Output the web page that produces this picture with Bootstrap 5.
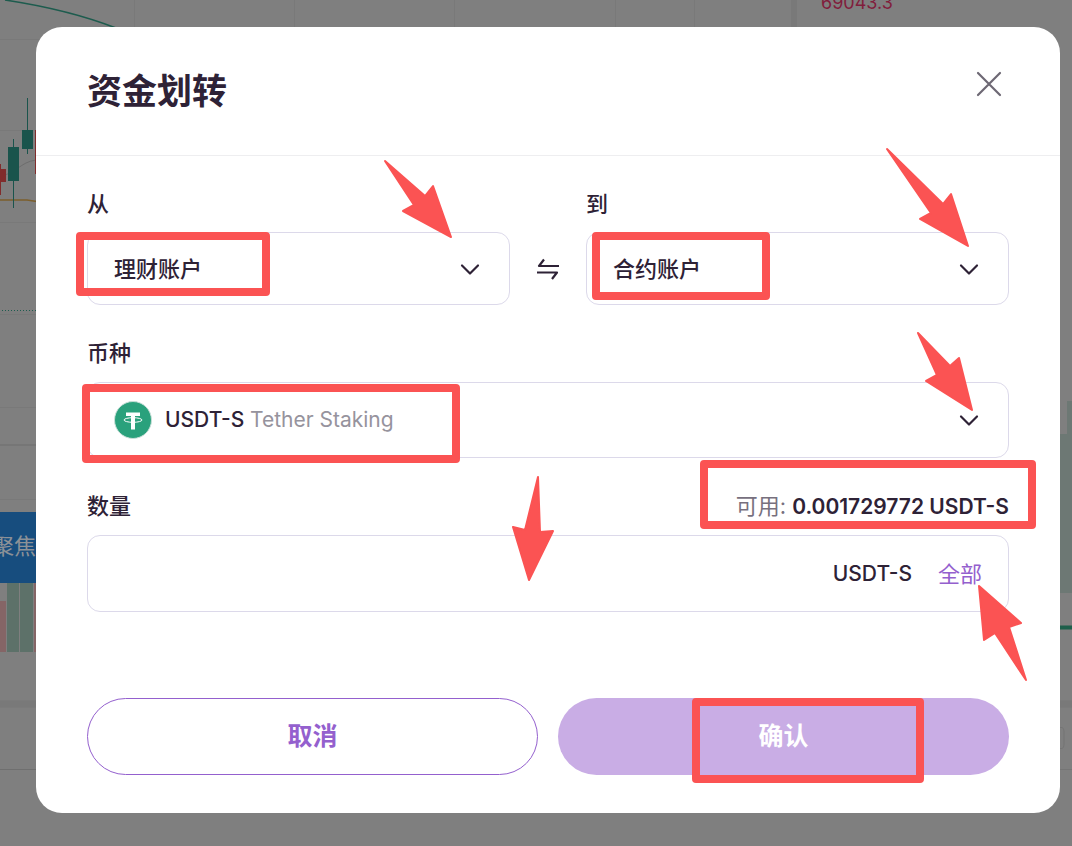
<!DOCTYPE html>
<html lang="zh-CN">
<head>
<meta charset="utf-8">
<meta name="viewport" content="width=device-width, initial-scale=1">
<title>资金划转</title>
<link href="https://cdn.jsdelivr.net/npm/bootstrap@5.3.0/dist/css/bootstrap.min.css" rel="stylesheet">
<style>
  :root {
    --ink: #2e2236;
    --line: #dcd9ea;
    --violet: #9460ce;
    --mark-red: #fb5353;
  }
  body {
    font-family: Inter, "Noto Sans CJK SC", sans-serif;
    font-size: 22px;
    line-height: 32px;
    color: var(--ink);
    background: #7f7f7f;
  }
  /* dimmed trading page behind the dialog */
  .market { z-index: 0; }
  .market-chart { flex: 1 1 0; min-width: 0; }
  .market-book { width: 281px; }
  .market-divider { width: 6px; height: 704px; background: #797979; }
  .market-price { font-size: 18px; line-height: 24px; color: #811d3c; margin-top: -9px; padding-left: 24px; }
  .market-right { width: 12px; }

  .transfer {
    z-index: 1;
    margin: 27px 12px 33px 36px;
    background: #fff;
    border-radius: 26px;
  }
  .transfer-head { padding: 32px 51px; border-bottom: 1px solid #eeeef0; }
  .transfer-title { font-size: 35px; line-height: 64px; font-weight: 700; }
  .transfer-body { padding: 32px 51px 38px; }
  .btn-x { width: 40px; height: 50px; }

  .field-label { font-weight: 500; line-height: 32px; margin-bottom: 12px; }
  .field-label-wide { margin-bottom: 13px; }
  .field {
    border: 1px solid var(--line);
    border-radius: 13px;
    height: 77px;
  }
  .field-account { height: 73px; }
  .field-coin { height: 76px; }
  .field select, .field input {
    appearance: none;
    border: 0;
    background: transparent;
    width: 100%;
    height: 100%;
    padding: 0 60px 0 26px;
    font-weight: 500;
    color: var(--ink);
    outline: 0;
    border-radius: 13px;
  }
  .field-coin select { padding-left: 77px; font-size: 21px; }
  .coin-face { left: 26px; top: 0; bottom: 0; pointer-events: none; }
  .coin-name { color: #96939d; padding-left: 98px; font-size: 21px; }
  .chev { right: 28px; top: 0; bottom: 0; pointer-events: none; }
  .swap { width: 76px; height: 73px; }
  .avail { color: #77707e; }
  .avail strong { font-weight: 600; color: var(--ink); font-size: 21px; }
  .unit { font-weight: 500; font-size: 21px; }
  .all { color: var(--violet); text-decoration: none; padding: 0 26px; }

  .actions { gap: 20px; margin-top: 86px; }
  .btn-pill { height: 77px; border-radius: 39px; font-size: 25px; font-weight: 700; }
  .btn-cancel, .btn-cancel:hover { border: 1px solid var(--violet); color: var(--violet); background: #fff; }
  .btn-ok, .btn-ok:hover { background: #c9ade5; color: #fff; border: 0; }

  /* red marker boxes and arrows lying over the form */
  .frame { position: absolute; border: 8px solid var(--mark-red); border-radius: 4px; pointer-events: none; z-index: 2; }
  .frame-from { left: -12px; top: -1px; width: 194px; height: 64px; }
  .frame-to { left: 5px; top: -1px; width: 178px; height: 68px; }
  .frame-coin { left: -6px; top: 1px; width: 378px; height: 79px; }
  .frame-avail { right: -27px; top: -30px; width: 336px; height: 69px; }
  .frame-ok { left: 134px; top: 0; width: 232px; height: 85px; }
  .arrow { position: absolute; pointer-events: none; z-index: 3; fill: var(--mark-red); stroke: var(--mark-red); stroke-width: 2; stroke-linejoin: round; overflow: visible; }
  .arrow-from { right: 57px; top: -73px; }
  .arrow-to { right: 39px; top: -85px; }
  .arrow-coin { right: 35px; top: -51px; }
  .arrow-amount { right: 454px; top: -60px; }
  .arrow-all { right: -20px; top: 49px; }
</style>
</head>
<body class="position-relative overflow-x-hidden">

<div class="market position-absolute top-0 start-0 w-100 h-100 d-flex overflow-hidden" aria-hidden="true">
  <svg class="market-chart" height="846">
    <g stroke="#797979">
      <path d="M134.500 0V40M294.500 0V40M454.500 0V40M615.500 0V40M694.500 0V40M0 39.500H40M0 130.500H40M0 222.500H40M0 314.500H40M0 407.500H40M0 499.500H40"/>
      <path d="M0 445H40M0 769.500H40" stroke="#6f6f6f"/>
      <path d="M0 704H40" stroke-width="7"/>
    </g>
    <path d="M5 0C45 6 85 16 116 28" fill="none" stroke="#1d5c4e" stroke-width="1.500"/>
    <path d="M0 176C16 174 20 162 36 160" fill="none" stroke="#6d6d6d"/>
    <path d="M0 200H27L40 202" fill="none" stroke="#7c5f2d" stroke-width="1.500"/>
    <path d="M2 310.500H40" stroke="#1d5c4e" stroke-dasharray="1 2"/>
    <path d="M13.500 139V208M27.500 98V154" stroke="#1a544c"/>
    <path d="M8 147H19V181H8ZM22 130H33V149H22Z" fill="#1a544c"/>
    <path d="M0 164H1V169H6V182H1V195H0ZM35 130H40V174H35Z" fill="#812c2c"/>
    <rect y="512" width="40" height="71" fill="#174d7e"/>
    <path d="M7 583H19V652H7ZM20 583H33V652H20Z" fill="#5d7169"/>
    <path d="M0 601H6V652H0ZM34 583H40V652H34Z" fill="#856566"/>
    <text x="-8" y="554" font-size="22" fill="#8c9197">聚焦</text>
  </svg>
  <div class="market-book flex-shrink-0 d-flex">
    <div class="market-divider"></div>
    <div class="market-price flex-grow-1">69043.3</div>
    <svg class="market-right" height="846" viewBox="0 0 12 846">
      <path d="M0 434H7V401H12V593H0Z" fill="#6d7874"/>
      <path d="M0 627.500H12" stroke="#1e5f4b" stroke-width="4"/>
      <path d="M0 704H12" stroke="#797979" stroke-width="7"/>
      <path d="M0 769.500H12M0 727.500H2Q4 728 4 731V745Q4 748 2 748.500H0" fill="none" stroke="#757575"/>
    </svg>
  </div>
</div>

<main class="transfer position-relative" role="dialog" aria-labelledby="ttl">
  <header class="transfer-head d-flex justify-content-between align-items-start">
    <h1 id="ttl" class="transfer-title m-0">资金划转</h1>
    <button type="button" class="btn-x btn p-0 border-0 d-flex align-items-center justify-content-center" aria-label="关闭">
      <svg width="26" height="26" viewBox="0 0 26 26" fill="none" stroke="#6d6874" stroke-width="2.200" stroke-linecap="round"><path d="M2 2 24 24M24 2 2 24"/></svg>
    </button>
  </header>

  <form class="transfer-body">
    <div class="d-flex align-items-end">
      <div class="flex-fill w-50">
        <label class="field-label d-block" for="from">从</label>
        <div class="field field-account position-relative">
          <select id="from"><option>理财账户</option><option>合约账户</option></select>
          <svg class="chev position-absolute my-auto" width="22" height="14" viewBox="0 0 22 14" fill="none" stroke="#2e2236" stroke-width="2.200" stroke-linecap="round" stroke-linejoin="round"><path d="M3 3.500 11 11.500 19 3.500"/></svg>
          <span class="frame frame-from"></span>
          <svg class="arrow arrow-from" width="68" height="78" viewBox="0 0 68 78"><path d="M1 1 41 36 49 26 67 77 19 51 30 45Z"/></svg>
        </div>
      </div>
      <button type="button" class="swap btn p-0 border-0 flex-shrink-0 d-flex align-items-center justify-content-center" aria-label="互换">
        <svg width="24" height="22" viewBox="0 0 24 22" fill="none" stroke="#2e2236" stroke-width="2.200" stroke-linejoin="round"><path d="M23 8H3L8 1.500M1 14.500H21L16 21"/></svg>
      </button>
      <div class="flex-fill w-50">
        <label class="field-label d-block" for="to">到</label>
        <div class="field field-account position-relative">
          <select id="to"><option>合约账户</option><option>理财账户</option></select>
          <svg class="chev position-absolute my-auto" width="22" height="14" viewBox="0 0 22 14" fill="none" stroke="#2e2236" stroke-width="2.200" stroke-linecap="round" stroke-linejoin="round"><path d="M3 3.500 11 11.500 19 3.500"/></svg>
          <span class="frame frame-to"></span>
          <svg class="arrow arrow-to" width="83" height="99" viewBox="0 0 83 99"><path d="M1 1 57 56 65 46 82 98 34 71 45 65Z"/></svg>
        </div>
      </div>
    </div>

    <div class="pt-1 mt-4">
      <label class="field-label field-label-wide d-block mt-1" for="coin">币种</label>
      <div class="field field-coin position-relative">
        <select id="coin"><option>USDT-S</option></select>
        <div class="coin-face position-absolute d-flex align-items-center">
          <svg width="38" height="38" viewBox="0 0 38 38"><circle cx="19" cy="19" r="18.500" fill="#2aa17c" stroke="#c8dfd8"/><path d="M12 11.500H26V15H21V28.500H17V15H12Z" fill="#fff"/><ellipse cx="19" cy="19" rx="9" ry="2.300" fill="none" stroke="#fff"/></svg>
          <span class="coin-name">Tether Staking</span>
        </div>
        <svg class="chev position-absolute my-auto" width="22" height="14" viewBox="0 0 22 14" fill="none" stroke="#2e2236" stroke-width="2.200" stroke-linecap="round" stroke-linejoin="round"><path d="M3 3.500 11 11.500 19 3.500"/></svg>
        <span class="frame frame-coin"></span>
        <svg class="arrow arrow-coin" width="56" height="79" viewBox="0 0 56 79"><path d="M1 1 33 34 42 26 55 78 9 49 20 43Z"/></svg>
      </div>
    </div>

    <div class="pt-1 mt-4">
      <div class="d-flex justify-content-between position-relative mt-1">
        <label class="field-label field-label-wide" for="amount">数量</label>
        <div class="avail">可用: <strong>0.001729772 USDT-S</strong></div>
        <span class="frame frame-avail"></span>
      </div>
      <div class="field position-relative d-flex align-items-center">
        <input id="amount" class="flex-grow-1" type="text" inputmode="decimal">
        <span class="unit text-nowrap">USDT-S</span>
        <a class="all text-nowrap" href="#">全部</a>
        <svg class="arrow arrow-amount" width="42" height="105" viewBox="0 0 42 105"><path d="M26 1 28 56 41 55 17 104 1 51 13 54Z"/></svg>
        <svg class="arrow arrow-all" width="50" height="96" viewBox="0 0 50 96"><path d="M1 1 43 38 31 42 48 95 17 48 6 55Z"/></svg>
      </div>
    </div>

    <div class="actions d-flex">
      <button type="button" class="btn btn-pill btn-cancel flex-fill w-50">取消</button>
      <button type="submit" class="btn btn-pill btn-ok flex-fill w-50 position-relative">确认<span class="frame frame-ok"></span></button>
    </div>
  </form>
</main>
<script src="https://cdn.jsdelivr.net/npm/bootstrap@5.3.0/dist/js/bootstrap.bundle.min.js"></script>
</body>
</html>
